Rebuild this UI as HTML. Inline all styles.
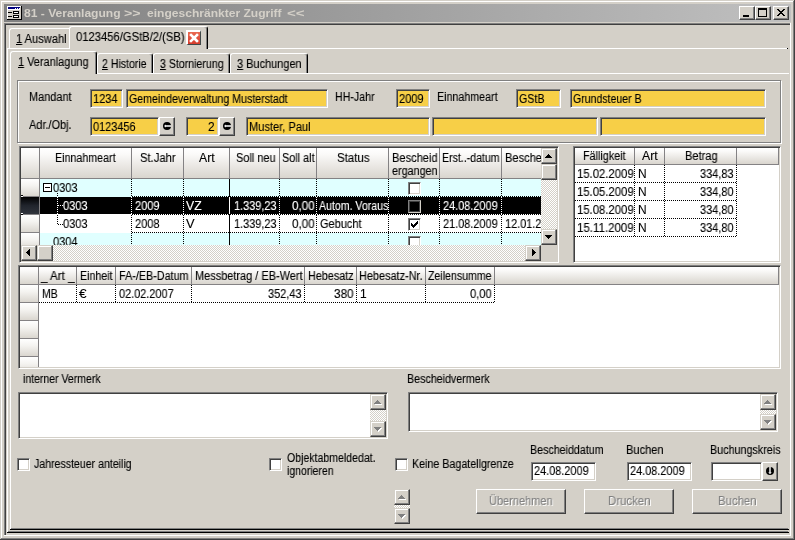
<!DOCTYPE html><html><head><meta charset="utf-8"><title>81 - Veranlagung</title><style>
html,body{margin:0;padding:0}
body{width:795px;height:540px;overflow:hidden;background:#D4D0C8;font-family:"Liberation Sans",sans-serif;font-size:12px;color:#000;position:relative;line-height:13px}
div,span{position:absolute;box-sizing:border-box;white-space:nowrap}
.t{line-height:13px;height:13px;transform-origin:0 0;will-change:transform;-webkit-text-stroke:0.12px}
.sk{border:1px solid;border-color:#808080 #fff #fff #808080;box-shadow:inset 1px 1px 0 #404040,inset -1px -1px 0 #D4D0C8}
.y{background:#F7CF47}
.w{background:#fff}
.btn{border:1px solid;border-color:#fff #404040 #404040 #fff;box-shadow:inset -1px -1px 0 #808080,inset 1px 1px 0 #D4D0C8;background:#D4D0C8}
.sb{border:1px solid;border-color:#D4D0C8 #404040 #404040 #D4D0C8;box-shadow:inset -1px -1px 0 #808080,inset 1px 1px 0 #fff;background:#D4D0C8}
.chk{background-image:repeating-conic-gradient(#fff 0% 25%,#D4D0C8 0% 50%,#fff 0% 75%,#D4D0C8 0% 100%);background-size:2px 2px}
.hd{background:linear-gradient(#fff,#FBFAF9 20%,#D9D5CE);border-right:1px solid #848284;border-bottom:1px solid #848284}
.rh{background:linear-gradient(#fff,#F4F3F0 40%,#DAD6CF);border-right:1px solid #848284;border-bottom:1px solid #848284}
.vd{width:1px;background-image:linear-gradient(#000 50%,transparent 50%);background-size:1px 2px}
.hdots{height:1px;background-image:linear-gradient(90deg,#000 50%,transparent 50%);background-size:2px 1px}
.dis{color:#808080;text-shadow:1px 1px 0 #fff}
.cb{width:13px;height:13px;background:#fff;border:1px solid;border-color:#808080 #fff #fff #808080;box-shadow:inset 1px 1px 0 #404040,inset -1px -1px 0 #D4D0C8}
u{text-decoration:underline;text-underline-offset:1px}
</style></head><body>
<div style="left:1px;top:1px;width:793px;height:1px;background:#fff"></div>
<div style="left:1px;top:1px;width:1px;height:538px;background:#fff"></div>
<div style="left:0px;top:539px;width:795px;height:1px;background:#404040"></div>
<div style="left:794px;top:0px;width:1px;height:540px;background:#404040"></div>
<div style="left:1px;top:538px;width:793px;height:1px;background:#808080"></div>
<div style="left:793px;top:1px;width:1px;height:538px;background:#808080"></div>
<div class="" style="left:4px;top:4px;width:787px;height:18px;background:linear-gradient(90deg,#808080,#C0C0C0)"></div>
<svg style="position:absolute;left:7px;top:6px" width="15" height="14" viewBox="0 0 15 14" shape-rendering="crispEdges">
<rect x="0" y="0" width="14" height="13" fill="#D4D0C8"/><rect x="0" y="0" width="1" height="13" fill="#fff"/><rect x="0" y="0" width="14" height="1" fill="#fff"/>
<rect x="14" y="0" width="1" height="14" fill="#000"/><rect x="0" y="13" width="15" height="1" fill="#000"/>
<rect x="1" y="1" width="12" height="2" fill="#000080"/>
<rect x="8" y="2" width="1" height="1" fill="#fff"/><rect x="10" y="2" width="1" height="1" fill="#fff"/><rect x="12" y="2" width="1" height="1" fill="#fff"/>
<rect x="1" y="3" width="12" height="1" fill="#fff"/>
<rect x="1" y="6" width="4" height="1" fill="#000"/><rect x="1" y="10" width="4" height="1" fill="#000"/>
<rect x="6" y="5" width="6" height="3" fill="#000"/><rect x="7" y="6" width="4" height="1" fill="#fff"/>
<rect x="6" y="9" width="6" height="3" fill="#000"/><rect x="7" y="10" width="4" height="1" fill="#fff"/>
</svg>
<span class="t" style="left:24px;top:7px;transform:scaleX(1.0973);font-weight:bold;color:#D4D0C8;font-size:11px;-webkit-text-stroke:0">81 - Veranlagung</span>
<span class="t" style="left:124px;top:7px;transform:scaleX(1.2909);font-weight:bold;color:#D4D0C8;font-size:11px;-webkit-text-stroke:0">&gt;&gt;</span>
<span class="t" style="left:147px;top:7px;transform:scaleX(1.0956);font-weight:bold;color:#D4D0C8;font-size:11px;-webkit-text-stroke:0">eingeschränkter Zugriff</span>
<span class="t" style="left:287px;top:7px;transform:scaleX(1.3687);font-weight:bold;color:#D4D0C8;font-size:11px;-webkit-text-stroke:0">&lt;&lt;</span>
<div class="btn" style="left:739px;top:6px;width:16px;height:14px;"></div>
<div style="left:743px;top:15px;width:6px;height:2px;background:#000"></div>
<div class="btn" style="left:755px;top:6px;width:16px;height:14px;"></div>
<div style="left:758px;top:8px;width:9px;height:9px;border:1px solid #000;border-top-width:2px"></div>
<div class="btn" style="left:773px;top:6px;width:16px;height:14px;"></div>
<svg style="position:absolute;left:777px;top:9px" width="8" height="7" viewBox="0 0 8 7" shape-rendering="crispEdges"><path d="M0 0h2v1h-2zM6 0h2v1h-2zM1 1h2v1h-2zM5 1h2v1h-2zM2 2h4v1h-4zM3 3h2v1h-2zM2 4h4v1h-4zM1 5h2v1h-2zM5 5h2v1h-2zM0 6h2v1h-2zM6 6h2v1h-2z" fill="#000"/></svg>
<div style="left:4px;top:23px;width:787px;height:1px;background:#808080"></div>
<div style="left:4px;top:23px;width:1px;height:513px;background:#808080"></div>
<div style="left:5px;top:24px;width:785px;height:1px;background:#404040"></div>
<div style="left:5px;top:24px;width:1px;height:511px;background:#404040"></div>
<div style="left:4px;top:535px;width:787px;height:1px;background:#fff"></div>
<div style="left:790px;top:23px;width:1px;height:513px;background:#fff"></div>
<div style="left:7px;top:48px;width:780px;height:1px;background:#fff"></div>
<div style="left:7px;top:48px;width:1px;height:484px;background:#fff"></div>
<div style="left:787px;top:48px;width:1px;height:1px;background:#000"></div>
<div style="left:8px;top:531px;width:780px;height:1px;background:#808080"></div>
<div style="left:7px;top:532px;width:782px;height:1px;background:#000"></div>
<div style="left:9px;top:28px;width:62px;height:20px;border:1px solid #fff;border-bottom:none;border-right:none;border-radius:3px 0 0 0"></div>
<span class="t" style="left:16px;top:33px;transform:scaleX(0.9247);"><u>1</u> Auswahl</span>
<div style="left:69px;top:26px;width:139px;height:23px;background:#D4D0C8;border-top:1px solid #fff;border-left:1px solid #fff;border-right:1px solid #000;border-radius:3px 3px 0 0;box-shadow:inset -1px 0 0 #808080"></div>
<span class="t" style="left:76px;top:31px;transform:scaleX(0.9356);">0123456/GStB/2/(SB)</span>
<div style="left:186px;top:30px;width:15px;height:15px;background:linear-gradient(#EA6A52,#D63C2C);border:solid;border-width:2px 1px 1px 2px;border-color:#fff #404848 #404848 #fff"></div>
<svg style="position:absolute;left:189px;top:33px" width="10" height="10" viewBox="0 0 10 10"><path d="M2 2L8 8M8 2L2 8" stroke="#fff" stroke-width="2.6" stroke-linecap="square"/></svg>
<div style="left:10px;top:73px;width:779px;height:1px;background:#fff"></div>
<div style="left:10px;top:73px;width:1px;height:456px;background:#fff"></div>
<div style="left:11px;top:528px;width:777px;height:1px;background:#808080"></div>
<div style="left:10px;top:529px;width:779px;height:1px;background:#000"></div>
<div style="left:97px;top:53px;width:56px;height:20px;border-top:1px solid #fff;border-left:1px solid #fff;border-right:1px solid #000;border-radius:3px 3px 0 0;box-shadow:inset -1px 0 0 #808080"></div>
<div style="left:153px;top:53px;width:77px;height:20px;border-top:1px solid #fff;border-left:1px solid #fff;border-right:1px solid #000;border-radius:3px 3px 0 0;box-shadow:inset -1px 0 0 #808080"></div>
<div style="left:230px;top:53px;width:78px;height:20px;border-top:1px solid #fff;border-left:1px solid #fff;border-right:1px solid #000;border-radius:3px 3px 0 0;box-shadow:inset -1px 0 0 #808080"></div>
<div style="left:10px;top:51px;width:87px;height:23px;background:#D4D0C8;border-top:1px solid #fff;border-left:1px solid #fff;border-right:1px solid #000;border-radius:3px 3px 0 0;box-shadow:inset -1px 0 0 #808080"></div>
<span class="t" style="left:18px;top:56px;transform:scaleX(0.9119);"><u>1</u> Veranlagung</span>
<span class="t" style="left:102px;top:58px;transform:scaleX(0.8796);"><u>2</u> Historie</span>
<span class="t" style="left:160px;top:58px;transform:scaleX(0.8826);"><u>3</u> Stornierung</span>
<span class="t" style="left:237px;top:58px;transform:scaleX(0.9131);"><u>3</u> Buchungen</span>
<div style="left:17px;top:80px;width:764px;height:63px;border:1px solid #808080;box-shadow:inset 1px 1px 0 #fff,1px 1px 0 #fff"></div>
<span class="t" style="left:29px;top:91px;transform:scaleX(0.9121);">Mandant</span>
<span class="t" style="left:29px;top:119px;transform:scaleX(0.9124);">Adr./Obj.</span>
<div class="sk y" style="left:90px;top:89px;width:33px;height:19px"></div>
<span class="t" style="left:93px;top:93px;transform:scaleX(0.9212);">1234</span>
<div class="sk y" style="left:126px;top:89px;width:202px;height:19px"></div>
<span class="t" style="left:129px;top:93px;transform:scaleX(0.8840);">Gemeindeverwaltung Musterstadt</span>
<span class="t" style="left:335px;top:91px;transform:scaleX(0.8865);">HH-Jahr</span>
<div class="sk y" style="left:396px;top:89px;width:34px;height:19px"></div>
<span class="t" style="left:399px;top:93px;transform:scaleX(0.9212);">2009</span>
<span class="t" style="left:437px;top:91px;transform:scaleX(0.8906);">Einnahmeart</span>
<div class="sk y" style="left:516px;top:89px;width:45px;height:19px"></div>
<span class="t" style="left:519px;top:93px;transform:scaleX(0.8924);">GStB</span>
<div class="sk y" style="left:570px;top:89px;width:196px;height:19px"></div>
<span class="t" style="left:573px;top:93px;transform:scaleX(0.8790);">Grundsteuer B</span>
<div class="sk y" style="left:90px;top:117px;width:69px;height:19px"></div>
<span class="t" style="left:93px;top:121px;transform:scaleX(0.9118);">0123456</span>
<div class="btn" style="left:159px;top:117px;width:16px;height:19px;"></div>
<svg style="position:absolute;left:163px;top:122px" width="8" height="8" viewBox="0 0 8 8"><circle cx="4" cy="4" r="4" fill="#000"/><rect x="2.4" y="3.25" width="5.6" height="1.5" fill="#fff"/><path d="M1 4L2.9 2.4V5.6Z" fill="#fff"/></svg>
<div class="sk y" style="left:186px;top:117px;width:33px;height:19px"></div>
<span class="t" style="left:208px;top:121px;transform:scaleX(0.9869);">2</span>
<div class="btn" style="left:219px;top:117px;width:16px;height:19px;"></div>
<svg style="position:absolute;left:223px;top:122px" width="8" height="8" viewBox="0 0 8 8"><circle cx="4" cy="4" r="4" fill="#000"/><rect x="2.4" y="3.25" width="5.6" height="1.5" fill="#fff"/><path d="M1 4L2.9 2.4V5.6Z" fill="#fff"/></svg>
<div class="sk y" style="left:246px;top:117px;width:184px;height:19px"></div>
<span class="t" style="left:249px;top:121px;transform:scaleX(0.9235);">Muster, Paul</span>
<div class="sk y" style="left:432px;top:117px;width:166px;height:19px"></div>
<div class="sk y" style="left:600px;top:117px;width:166px;height:19px"></div>
<div class="sk w" style="left:19px;top:146px;width:540px;height:117px;"></div>
<div style="left:21px;top:148px;width:520px;height:97px;overflow:hidden;background:#fff">
<div class="hd" style="left:0px;top:0;width:19px;height:31px"></div>
<div class="hd" style="left:19px;top:0;width:92px;height:31px"></div>
<div class="hd" style="left:111px;top:0;width:52px;height:31px"></div>
<div class="hd" style="left:163px;top:0;width:46px;height:31px"></div>
<div class="hd" style="left:209px;top:0;width:50px;height:31px"></div>
<div class="hd" style="left:259px;top:0;width:37px;height:31px"></div>
<div class="hd" style="left:296px;top:0;width:72px;height:31px"></div>
<div class="hd" style="left:368px;top:0;width:51px;height:31px"></div>
<div class="hd" style="left:419px;top:0;width:62px;height:31px"></div>
<div class="hd" style="left:481px;top:0;width:70px;height:31px"></div>
<span class="t" style="left:34px;top:4px;transform:scaleX(0.8906);">Einnahmeart</span>
<span class="t" style="left:119px;top:4px;transform:scaleX(0.9365);">St.Jahr</span>
<span class="t" style="left:178px;top:4px;transform:scaleX(1.0167);">Art</span>
<span class="t" style="left:215px;top:4px;transform:scaleX(0.9130);">Soll neu</span>
<span class="t" style="left:261px;top:4px;transform:scaleX(0.9048);">Soll alt</span>
<span class="t" style="left:316px;top:4px;transform:scaleX(0.9579);">Status</span>
<span class="t" style="left:371px;top:4px;transform:scaleX(0.9235);">Bescheid</span>
<span class="t" style="left:371px;top:17px;transform:scaleX(0.8991);">ergangen</span>
<span class="t" style="left:421px;top:4px;transform:scaleX(0.8813);">Erst..-datum</span>
<span class="t" style="left:484px;top:4px;transform:scaleX(0.9235);">Bescheid</span>
<div style="left:19px;top:31px;width:520px;height:18px;background:#E0FFFF"></div>
<div style="left:19px;top:49px;width:520px;height:17px;background:#000"></div>
<div style="left:19px;top:66px;width:520px;height:19px;background:#fff"></div>
<div style="left:19px;top:85px;width:520px;height:18px;background:#E0FFFF"></div>
<div class="rh" style="left:0;top:31px;width:19px;height:18px"></div>
<div style="left:0;top:49px;width:19px;height:17px;background:linear-gradient(#000,#20242C 50%,#30343C);border-right:1px solid #848284"></div>
<div style="left:0;top:66px;width:19px;height:1px;background:#848284"></div>
<div class="rh" style="left:0;top:67px;width:19px;height:18px"></div>
<div class="rh" style="left:0;top:85px;width:19px;height:18px"></div>
<div class="vd" style="left:110px;top:31px;height:70px"></div>
<div class="vd" style="left:110px;top:49px;height:17px;background-image:linear-gradient(#fff 50%,transparent 50%)"></div>
<div class="vd" style="left:162px;top:31px;height:70px"></div>
<div class="vd" style="left:162px;top:49px;height:17px;background-image:linear-gradient(#fff 50%,transparent 50%)"></div>
<div style="left:208px;top:31px;width:1px;height:70px;background:#000"></div>
<div style="left:208px;top:49px;width:1px;height:17px;background:#fff"></div>
<div class="vd" style="left:258px;top:31px;height:70px"></div>
<div class="vd" style="left:258px;top:49px;height:17px;background-image:linear-gradient(#fff 50%,transparent 50%)"></div>
<div class="vd" style="left:295px;top:31px;height:70px"></div>
<div class="vd" style="left:295px;top:49px;height:17px;background-image:linear-gradient(#fff 50%,transparent 50%)"></div>
<div class="vd" style="left:367px;top:31px;height:70px"></div>
<div class="vd" style="left:367px;top:49px;height:17px;background-image:linear-gradient(#fff 50%,transparent 50%)"></div>
<div class="vd" style="left:418px;top:31px;height:70px"></div>
<div class="vd" style="left:418px;top:49px;height:17px;background-image:linear-gradient(#fff 50%,transparent 50%)"></div>
<div class="vd" style="left:480px;top:31px;height:70px"></div>
<div class="vd" style="left:480px;top:49px;height:17px;background-image:linear-gradient(#fff 50%,transparent 50%)"></div>
<div class="hdots" style="left:111px;top:48px;width:410px"></div>
<div class="hdots" style="left:111px;top:66px;width:410px"></div>
<div class="hdots" style="left:111px;top:84px;width:410px"></div>
<div style="left:0;top:47px;width:2px;height:1px;background:#000"></div><div style="left:0;top:48px;width:2px;height:1px;background:#fff"></div><div style="left:0;top:65px;width:2px;height:1px;background:#fff"></div><div style="left:0;top:66px;width:2px;height:1px;background:#000"></div>
<div style="left:22px;top:35px;width:9px;height:9px;border:1px solid #000;background:#fff"></div><div style="left:24px;top:39px;width:5px;height:1px;background:#000"></div>
<div class="vd" style="left:36px;top:45px;height:32px"></div>
<div class="vd" style="left:36px;top:49px;height:17px;background-image:linear-gradient(#fff 50%,transparent 50%)"></div>
<div class="hdots" style="left:37px;top:57px;width:5px;background-image:linear-gradient(90deg,#fff 50%,transparent 50%)"></div>
<div class="hdots" style="left:37px;top:76px;width:5px"></div>
<span class="t" style="left:32px;top:34px;transform:scaleX(0.9212);">0303</span>
<span class="t" style="left:42px;top:52px;transform:scaleX(0.9212);color:#fff">0303</span>
<span class="t" style="left:114px;top:52px;transform:scaleX(0.9212);color:#fff">2009</span>
<span class="t" style="left:165px;top:52px;transform:scaleX(1.0167);color:#fff">VZ</span>
<span class="t" style="left:213px;top:52px;transform:scaleX(0.9118);color:#fff">1.339,23</span>
<span class="t" style="left:271px;top:52px;transform:scaleX(0.9675);color:#fff">0,00</span>
<span class="t" style="left:298px;top:52px;transform:scaleX(0.8813);color:#fff">Autom. Vorausz.</span>
<span class="t" style="left:422px;top:52px;transform:scaleX(0.9091);color:#fff">24.08.2009</span>
<span class="t" style="left:42px;top:70px;transform:scaleX(0.9212);">0303</span>
<span class="t" style="left:114px;top:70px;transform:scaleX(0.9212);">2008</span>
<span class="t" style="left:165px;top:70px;transform:scaleX(1.0729);">V</span>
<span class="t" style="left:213px;top:70px;transform:scaleX(0.9118);">1.339,23</span>
<span class="t" style="left:271px;top:70px;transform:scaleX(0.9675);">0,00</span>
<span class="t" style="left:299px;top:70px;transform:scaleX(0.9168);">Gebucht</span>
<span class="t" style="left:422px;top:70px;transform:scaleX(0.9091);">21.08.2009</span>
<span class="t" style="left:484px;top:70px;transform:scaleX(0.9091);">12.01.2009</span>
<span class="t" style="left:32px;top:88px;transform:scaleX(0.9212);">0304</span>
<div style="left:367px;top:49px;width:30px;height:17px;background:#000"></div>
<div class="vd" style="left:367px;top:49px;height:17px;background-image:linear-gradient(#fff 50%,transparent 50%)"></div>
<div class="cb" style="left:387px;top:34px"></div>
<div class="cb" style="left:387px;top:52px;background:#000;border-color:#808080 #D4D0C8 #D4D0C8 #808080;box-shadow:inset 1px 1px 0 #404040,inset -1px -1px 0 #404040"></div>
<div class="cb" style="left:387px;top:70px"></div>
<svg style="position:absolute;left:390px;top:73px" width="7" height="7" viewBox="0 0 7 7" shape-rendering="crispEdges"><path d="M0 2h1v3h-1zM1 3h1v3h-1zM2 4h1v3h-1zM3 3h1v3h-1zM4 2h1v3h-1zM5 1h1v3h-1zM6 0h1v3h-1z" fill="#000"/></svg>
<div class="cb" style="left:387px;top:88px"></div>
</div>
<div class="chk" style="left:541px;top:148px;width:16px;height:97px;"></div>
<div class="sb" style="left:541px;top:148px;width:16px;height:16px;"></div>
<svg style="position:absolute;left:545px;top:154px" width="7" height="4" shape-rendering="crispEdges"><path d="M3 0h1v1h-1zM2 1h3v1h-3zM1 2h5v1h-5zM0 3h7v1h-7z" fill="#000"/></svg>
<div class="sb" style="left:541px;top:164px;width:16px;height:16px;"></div>
<div class="sb" style="left:541px;top:229px;width:16px;height:16px;"></div>
<svg style="position:absolute;left:545px;top:235px" width="7" height="4" shape-rendering="crispEdges"><path d="M0 0h7v1h-7zM1 1h5v1h-5zM2 2h3v1h-3zM3 3h1v1h-1z" fill="#000"/></svg>
<div class="chk" style="left:21px;top:245px;width:520px;height:16px;"></div>
<div class="" style="left:541px;top:245px;width:16px;height:16px;background:#D4D0C8"></div>
<div class="sb" style="left:21px;top:245px;width:16px;height:16px;"></div>
<svg style="position:absolute;left:26px;top:249px" width="4" height="7" shape-rendering="crispEdges"><path d="M3 0h1v7h-1zM2 1h1v5h-1zM1 2h1v3h-1zM0 3h1v1h-1z" fill="#000"/></svg>
<div class="sb" style="left:37px;top:245px;width:16px;height:16px;"></div>
<div class="sb" style="left:525px;top:245px;width:16px;height:16px;"></div>
<svg style="position:absolute;left:532px;top:249px" width="4" height="7" shape-rendering="crispEdges"><path d="M0 0h1v7h-1zM1 1h1v5h-1zM2 2h1v3h-1zM3 3h1v1h-1z" fill="#000"/></svg>
<div class="sk w" style="left:573px;top:146px;width:208px;height:117px;"></div>
<div style="left:575px;top:148px;width:204px;height:113px;overflow:hidden;background:#fff">
<div class="hd" style="left:0px;top:0;width:60px;height:17px"></div>
<div class="hd" style="left:60px;top:0;width:30px;height:17px"></div>
<div class="hd" style="left:90px;top:0;width:72px;height:17px"></div>
<div class="hd" style="left:162px;top:0;width:42px;height:17px"></div>
<span class="t" style="left:8px;top:2px;transform:scaleX(0.8995);">Fälligkeit</span>
<span class="t" style="left:67px;top:2px;transform:scaleX(1.0167);">Art</span>
<span class="t" style="left:110px;top:2px;transform:scaleX(0.9220);">Betrag</span>
<span class="t" style="left:2px;top:20px;transform:scaleX(0.9424);">15.02.2009</span>
<span class="t" style="left:63px;top:20px;transform:scaleX(0.9917);">N</span>
<span class="t" style="left:125px;top:20px;transform:scaleX(0.9155);">334,83</span>
<div class="hdots" style="left:0;top:34px;width:162px"></div>
<span class="t" style="left:2px;top:38px;transform:scaleX(0.9424);">15.05.2009</span>
<span class="t" style="left:63px;top:38px;transform:scaleX(0.9917);">N</span>
<span class="t" style="left:125px;top:38px;transform:scaleX(0.9155);">334,80</span>
<div class="hdots" style="left:0;top:52px;width:162px"></div>
<span class="t" style="left:2px;top:56px;transform:scaleX(0.9424);">15.08.2009</span>
<span class="t" style="left:63px;top:56px;transform:scaleX(0.9917);">N</span>
<span class="t" style="left:125px;top:56px;transform:scaleX(0.9155);">334,80</span>
<div class="hdots" style="left:0;top:70px;width:162px"></div>
<span class="t" style="left:2px;top:74px;transform:scaleX(0.9565);">15.11.2009</span>
<span class="t" style="left:63px;top:74px;transform:scaleX(0.9917);">N</span>
<span class="t" style="left:125px;top:74px;transform:scaleX(0.9155);">334,80</span>
<div class="hdots" style="left:0;top:88px;width:162px"></div>
<div class="vd" style="left:59px;top:17px;height:72px"></div>
<div class="vd" style="left:89px;top:17px;height:72px"></div>
<div class="vd" style="left:161px;top:17px;height:72px"></div>
</div>
<div class="sk w" style="left:18px;top:265px;width:763px;height:104px;"></div>
<div style="left:20px;top:267px;width:759px;height:100px;overflow:hidden;background:#fff">
<div class="hd" style="left:0px;top:0;width:19px;height:18px"></div>
<div class="hd" style="left:19px;top:0;width:38px;height:18px"></div>
<div class="hd" style="left:57px;top:0;width:39px;height:18px"></div>
<div class="hd" style="left:96px;top:0;width:76px;height:18px"></div>
<div class="hd" style="left:172px;top:0;width:113px;height:18px"></div>
<div class="hd" style="left:285px;top:0;width:52px;height:18px"></div>
<div class="hd" style="left:337px;top:0;width:69px;height:18px"></div>
<div class="hd" style="left:406px;top:0;width:69px;height:18px"></div>
<div class="hd" style="left:475px;top:0;width:284px;height:18px"></div>
<span class="t" style="left:21px;top:3px;transform:scaleX(0.9686);">_ Art _</span>
<span class="t" style="left:60px;top:3px;transform:scaleX(0.8882);">Einheit</span>
<span class="t" style="left:99px;top:3px;transform:scaleX(0.8997);">FA-/EB-Datum</span>
<span class="t" style="left:175px;top:3px;transform:scaleX(0.9132);">Messbetrag / EB-Wert</span>
<span class="t" style="left:288px;top:3px;transform:scaleX(0.8994);">Hebesatz</span>
<span class="t" style="left:339px;top:3px;transform:scaleX(0.9082);">Hebesatz-Nr.</span>
<span class="t" style="left:408px;top:3px;transform:scaleX(0.8830);">Zeilensumme</span>
<div class="rh" style="left:0;top:18px;width:19px;height:18px"></div>
<div class="rh" style="left:0;top:36px;width:19px;height:18px"></div>
<div class="rh" style="left:0;top:54px;width:19px;height:18px"></div>
<div class="rh" style="left:0;top:72px;width:19px;height:18px"></div>
<div class="rh" style="left:0;top:90px;width:19px;height:18px"></div>
<span class="t" style="left:22px;top:21px;transform:scaleX(0.8667);">MB</span>
<span class="t" style="left:59px;top:21px;transform:scaleX(1.1364);">€</span>
<span class="t" style="left:99px;top:21px;transform:scaleX(0.9091);">02.02.2007</span>
<span class="t" style="left:248px;top:21px;transform:scaleX(0.9155);">352,43</span>
<span class="t" style="left:314px;top:21px;transform:scaleX(0.9785);">380</span>
<span class="t" style="left:340px;top:21px;transform:scaleX(0.9869);">1</span>
<span class="t" style="left:450px;top:21px;transform:scaleX(0.9247);">0,00</span>
<div class="hdots" style="left:19px;top:35px;width:456px"></div>
<div class="vd" style="left:56px;top:18px;height:18px"></div>
<div class="vd" style="left:95px;top:18px;height:18px"></div>
<div class="vd" style="left:171px;top:18px;height:18px"></div>
<div class="vd" style="left:284px;top:18px;height:18px"></div>
<div class="vd" style="left:336px;top:18px;height:18px"></div>
<div class="vd" style="left:405px;top:18px;height:18px"></div>
<div class="vd" style="left:474px;top:18px;height:18px"></div>
</div>
<span class="t" style="left:23px;top:373px;transform:scaleX(0.8748);">interner Vermerk</span>
<span class="t" style="left:407px;top:373px;transform:scaleX(0.8910);">Bescheidvermerk</span>
<div class="sk w" style="left:18px;top:392px;width:370px;height:47px;"></div>
<div class="chk" style="left:370px;top:394px;width:16px;height:43px;"></div>
<div class="sb" style="left:370px;top:394px;width:16px;height:16px;"></div>
<svg style="position:absolute;left:375px;top:401px" width="7" height="4" shape-rendering="crispEdges"><path d="M3 0h1v1h-1zM2 1h3v1h-3zM1 2h5v1h-5zM0 3h7v1h-7z" fill="#fff"/></svg><svg style="position:absolute;left:374px;top:400px" width="7" height="4" shape-rendering="crispEdges"><path d="M3 0h1v1h-1zM2 1h3v1h-3zM1 2h5v1h-5zM0 3h7v1h-7z" fill="#808080"/></svg>
<div class="sb" style="left:370px;top:421px;width:16px;height:16px;"></div>
<svg style="position:absolute;left:375px;top:428px" width="7" height="4" shape-rendering="crispEdges"><path d="M0 0h7v1h-7zM1 1h5v1h-5zM2 2h3v1h-3zM3 3h1v1h-1z" fill="#fff"/></svg><svg style="position:absolute;left:374px;top:427px" width="7" height="4" shape-rendering="crispEdges"><path d="M0 0h7v1h-7zM1 1h5v1h-5zM2 2h3v1h-3zM3 3h1v1h-1z" fill="#808080"/></svg>
<div class="sk w" style="left:408px;top:392px;width:370px;height:40px;"></div>
<div class="chk" style="left:760px;top:394px;width:16px;height:36px;"></div>
<div class="sb" style="left:760px;top:394px;width:16px;height:16px;"></div>
<svg style="position:absolute;left:765px;top:401px" width="7" height="4" shape-rendering="crispEdges"><path d="M3 0h1v1h-1zM2 1h3v1h-3zM1 2h5v1h-5zM0 3h7v1h-7z" fill="#fff"/></svg><svg style="position:absolute;left:764px;top:400px" width="7" height="4" shape-rendering="crispEdges"><path d="M3 0h1v1h-1zM2 1h3v1h-3zM1 2h5v1h-5zM0 3h7v1h-7z" fill="#808080"/></svg>
<div class="sb" style="left:760px;top:414px;width:16px;height:16px;"></div>
<svg style="position:absolute;left:765px;top:421px" width="7" height="4" shape-rendering="crispEdges"><path d="M0 0h7v1h-7zM1 1h5v1h-5zM2 2h3v1h-3zM3 3h1v1h-1z" fill="#fff"/></svg><svg style="position:absolute;left:764px;top:420px" width="7" height="4" shape-rendering="crispEdges"><path d="M0 0h7v1h-7zM1 1h5v1h-5zM2 2h3v1h-3zM3 3h1v1h-1z" fill="#808080"/></svg>
<div class="cb" style="left:17px;top:458px"></div>
<span class="t" style="left:34px;top:458px;transform:scaleX(0.8814);">Jahressteuer anteilig</span>
<div class="cb" style="left:269px;top:458px"></div>
<span class="t" style="left:287px;top:452px;transform:scaleX(0.8795);">Objektabmeldedat.</span>
<span class="t" style="left:287px;top:465px;transform:scaleX(0.8731);">ignorieren</span>
<div class="cb" style="left:395px;top:458px"></div>
<span class="t" style="left:412px;top:458px;transform:scaleX(0.8905);">Keine Bagatellgrenze</span>
<div class="chk" style="left:394px;top:489px;width:16px;height:35px;"></div>
<div class="sb" style="left:394px;top:489px;width:16px;height:16px;"></div>
<svg style="position:absolute;left:399px;top:496px" width="7" height="4" shape-rendering="crispEdges"><path d="M3 0h1v1h-1zM2 1h3v1h-3zM1 2h5v1h-5zM0 3h7v1h-7z" fill="#fff"/></svg><svg style="position:absolute;left:398px;top:495px" width="7" height="4" shape-rendering="crispEdges"><path d="M3 0h1v1h-1zM2 1h3v1h-3zM1 2h5v1h-5zM0 3h7v1h-7z" fill="#808080"/></svg>
<div class="sb" style="left:394px;top:508px;width:16px;height:16px;"></div>
<svg style="position:absolute;left:399px;top:515px" width="7" height="4" shape-rendering="crispEdges"><path d="M0 0h7v1h-7zM1 1h5v1h-5zM2 2h3v1h-3zM3 3h1v1h-1z" fill="#fff"/></svg><svg style="position:absolute;left:398px;top:514px" width="7" height="4" shape-rendering="crispEdges"><path d="M0 0h7v1h-7zM1 1h5v1h-5zM2 2h3v1h-3zM3 3h1v1h-1z" fill="#808080"/></svg>
<span class="t" style="left:530px;top:444px;transform:scaleX(0.8898);">Bescheiddatum</span>
<span class="t" style="left:626px;top:444px;transform:scaleX(0.9238);">Buchen</span>
<span class="t" style="left:710px;top:444px;transform:scaleX(0.8969);">Buchungskreis</span>
<div class="sk w" style="left:531px;top:462px;width:65px;height:19px"></div>
<span class="t" style="left:534px;top:465px;transform:scaleX(0.9091);">24.08.2009</span>
<div class="sk w" style="left:627px;top:462px;width:65px;height:19px"></div>
<span class="t" style="left:630px;top:465px;transform:scaleX(0.9091);">24.08.2009</span>
<div class="sk w" style="left:711px;top:462px;width:51px;height:19px"></div>
<div class="btn" style="left:762px;top:462px;width:16px;height:19px;"></div>
<svg style="position:absolute;left:766px;top:467px" width="8" height="8" viewBox="0 0 8 8"><circle cx="4" cy="4" r="4" fill="#000"/><rect x="3.3" y="0" width="1.4" height="5.6" fill="#fff"/><path d="M4 7.2L2.3 5.2H5.7Z" fill="#fff"/></svg>
<div class="btn" style="left:476px;top:489px;width:90px;height:25px;"></div>
<span class="t dis" style="left:489px;top:495px;transform:scaleX(0.9168);">Übernehmen</span>
<div class="btn" style="left:584px;top:489px;width:90px;height:25px;"></div>
<span class="t dis" style="left:608px;top:495px;transform:scaleX(0.9533);">Drucken</span>
<div class="btn" style="left:692px;top:489px;width:90px;height:25px;"></div>
<span class="t dis" style="left:718px;top:495px;transform:scaleX(0.9483);">Buchen</span>
</body></html>
